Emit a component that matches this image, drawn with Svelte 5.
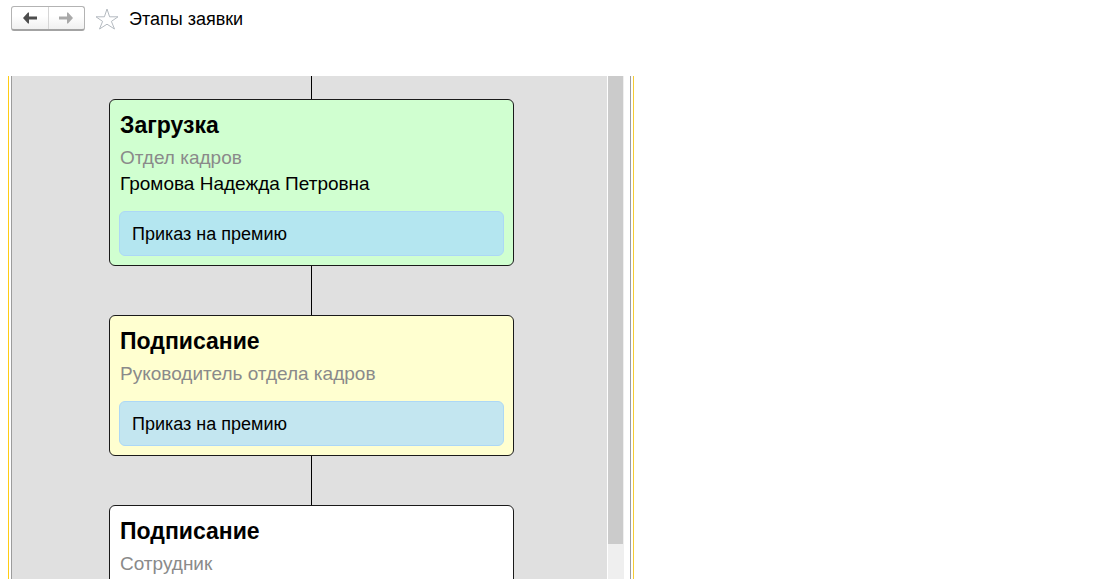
<script>
  const stages = [
    {
      title: 'Загрузка',
      role: 'Отдел кадров',
      person: 'Громова Надежда Петровна',
      doc: 'Приказ на премию',
      state: 'done'
    },
    {
      title: 'Подписание',
      role: 'Руководитель отдела кадров',
      doc: 'Приказ на премию',
      state: 'active'
    },
    { title: 'Подписание', role: 'Сотрудник', state: 'pending' }
  ];
</script>

<div class="page">
  <header>
    <nav aria-label="История">
      <button type="button" aria-label="Назад">
        <svg width="14" height="12" viewBox="0 0 14 12" fill="#4d4d4d">
          <path d="M0 6 5 .5h1V4.500h8v3H6v4H5z" />
        </svg>
      </button>
      <button type="button" aria-label="Вперед">
        <svg width="14" height="12" viewBox="0 0 14 12" fill="#a9a9a9">
          <path d="M14 6 9 .5H8v4H0v3h8v4h1z" />
        </svg>
      </button>
    </nav>
    <button class="star" type="button" aria-label="В избранное">
      <svg width="24" height="24" viewBox="0 0 24 24" fill="#fff" stroke="#b4bac0">
        <path d="M12 2 14.600 9.800H23L16.400 14.400 19.500 22 12 17.200 4.500 22 7.600 14.400 1 9.800H9.400Z" />
      </svg>
    </button>
    <h1>Этапы заявки</h1>
  </header>

  <main>
    <div class="frame">
      <div class="chart">
        {#each stages as stage}
          <div class="link"></div>
          <section class="card {stage.state}">
            <h2>{stage.title}</h2>
            <p class="role">{stage.role}</p>
            {#if stage.person}<p class="person">{stage.person}</p>{/if}
            {#if stage.doc}<div class="doc">{stage.doc}</div>{/if}
          </section>
        {/each}
      </div>
      <div class="track"><div class="thumb"></div></div>
    </div>
  </main>
</div>

<style>
  :global(body) {
    background: #fff;
  }
  .page {
    display: flex;
    flex-direction: column;
    height: 100vh;
    overflow: hidden;
    font: 18px/23px 'Liberation Sans', Arial, sans-serif;
    color: #000;
  }
  header {
    display: flex;
    align-items: center;
    flex: none;
    padding: 6px 11px 45px;
  }
  nav {
    display: flex;
    box-sizing: border-box;
    width: 74px;
    height: 25px;
    border: 1px solid #b3b3b3;
    border-bottom: 2px solid #a3a3a3;
    border-radius: 3px;
    background: linear-gradient(#fff 40%, #f0f0f0);
  }
  button {
    display: flex;
    align-items: center;
    justify-content: center;
    padding: 0;
    border: 0;
    background: none;
  }
  nav button {
    flex: 1;
  }
  nav button + button {
    border-left: 1px solid #d6d6d6;
  }
  .star {
    margin: 0 10px;
  }
  h1,
  h2,
  p {
    margin: 0;
  }
  h1 {
    font-size: 18px;
    font-weight: 400;
    line-height: 24px;
  }
  main {
    box-sizing: border-box;
    display: flex;
    flex: 1;
    min-height: 0;
    width: calc(57% - 1px);
    margin-left: 8px;
    padding: 0 2px;
    border-left: 1px solid #ffcc14;
    border-right: 1px solid #f5cb35;
  }
  .frame {
    display: flex;
    flex: 1;
    min-height: 0;
    padding-right: 6px;
    border-left: 1px solid #9c9c9c;
    border-right: 1px solid #9c9c9c;
  }
  .chart {
    display: flex;
    flex-direction: column;
    align-items: center;
    flex: 1;
    padding-left: 4px;
    overflow: hidden;
    background: #e0e0e0;
  }
  .link {
    flex: none;
    width: 1px;
    height: 49px;
    background: #000;
  }
  .link:first-child {
    height: 23px;
  }
  .card {
    box-sizing: border-box;
    flex: none;
    width: 100%;
    max-width: 405px;
    padding: 9px;
    border: 1px solid #1a1a1a;
    border-radius: 6px;
  }
  .done {
    background: #d0ffd0;
  }
  .active {
    background: #ffffd0;
  }
  .pending {
    background: #fff;
  }
  h2 {
    padding-left: 1px;
    font-size: 23px;
    line-height: 32px;
  }
  .role,
  .person {
    padding-left: 1px;
    font-size: 19px;
    line-height: 26px;
  }
  .role {
    padding-top: 4px;
    color: #8a8a8a;
  }
  .doc {
    margin-top: 14px;
    padding: 11px 12px 9px;
    border: 1px solid #add8f6;
    border-radius: 6px;
    background: #b4e6f0;
  }
  .active .doc {
    background: #c3e6f0;
  }
  .track {
    flex: none;
    width: 15px;
    border-left: 1px solid #fff;
    border-right: 1px solid #efefef;
    background: #efefef;
  }
  .thumb {
    height: 93%;
    background: #cbcbcb;
  }
</style>
